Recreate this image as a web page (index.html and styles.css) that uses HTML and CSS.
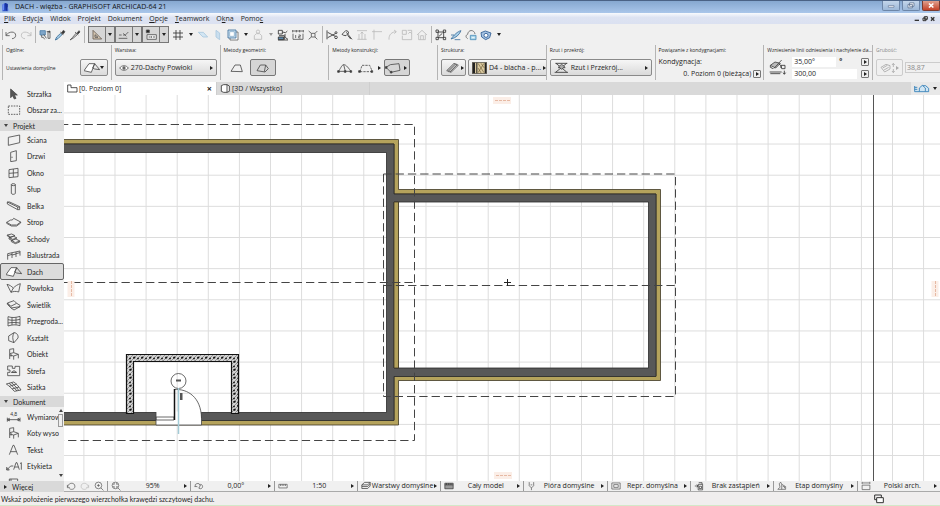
FILE: index.html
```html
<!DOCTYPE html>
<html lang="pl">
<head>
  <meta charset="UTF-8" />
  <title>DACH - więźba - GRAPHISOFT ARCHICAD-64 21</title>
  <link rel="stylesheet" href="styles.css">
</head>
<body>
  <header class="titlebar">
    <svg class="app-icon" viewBox="0 0 30 30"><path d="M4 8l8-5 8 3v22H4z" fill="#2c50c8"/><path d="M12 3l8 3v22l-6-4z" fill="#16309a"/><path d="M20 14l6 14h-6z" fill="#7fa2f0"/><path d="M4 8l5-3v18l-5 5z" fill="#6d8ff0"/></svg>
    <h1>DACH - więźba - GRAPHISOFT ARCHICAD-64 21</h1>
    <div class="window-buttons">
      <button aria-label="Minimalizuj"><svg viewBox="0 0 51 27"><path d="M17 14h18v5H17z" fill="#fff" stroke="#5b6f8e" stroke-width="2"/></svg></button>
      <button aria-label="Przywróć"><svg viewBox="0 0 51 27"><path d="M21 5h14v11H21zM16 10h14v11H16z" fill="#fff" stroke="#5b6f8e" stroke-width="2.5"/></svg></button>
      <button class="close" aria-label="Zamknij"><svg viewBox="0 0 51 27"><path d="M19 7l14 13M33 7L19 20" stroke="#fff" stroke-width="5"/></svg></button>
    </div>
  </header>

  <nav class="menubar">
    <button><u>P</u>lik</button>
    <button>Edyc<u>j</u>a</button>
    <button>Widok</button>
    <button>Projekt</button>
    <button>Dokument</button>
    <button><u>O</u>pcje</button>
    <button><u>T</u>eamwork</button>
    <button>O<u>k</u>na</button>
    <button>Pomo<u>c</u></button>
    <svg class="doc-buttons" viewBox="0 0 66 24"><path d="M2 16h13" stroke="#333" stroke-width="4"/><path d="M31 5h9v8h-9zM27 9h9v8h-9z" fill="#eee" stroke="#333" stroke-width="3"/><path d="M51 7l10 10M61 7L51 17" stroke="#333" stroke-width="4"/></svg>
  </nav>

  <div class="toolbar">
    <span class="grip"></span>
    <button aria-label="Cofnij"><svg class="icon" viewBox="0 0 36 36"><path d="M3 9v11h11M3 19C12 6 32 6 32 19c0 7-6 10-11 10"/></svg></button>
    <button aria-label="Ponów"><svg class="icon off" viewBox="0 0 36 36"><path d="M33 9v11H22M33 19C24 6 4 6 4 19c0 7 6 10 11 10"/></svg></button>
    <span class="divider"></span>
    <button aria-label="Znajdź"><svg class="icon" viewBox="0 0 36 36"><path d="M3 5h16v13H3z" fill="#7fa6c9" stroke="#4f7fa8"/><path d="M8 18v7h5l4 6M14 16l8 12M27 6v22M23 8h10v20h-6"/><circle cx="31" cy="8" r="2" fill="#333"/></svg></button>
    <button aria-label="Pobierz parametry"><svg class="icon" viewBox="0 0 36 36"><path d="M4 33l4-9L20 13l4 4-12 12z" fill="#a9cfe8" stroke="#3b6c96"/><path d="M19 9l9 8M22 12l6-8 5 4-6 8z" fill="#333"/></svg></button>
    <button aria-label="Przekaż parametry"><svg class="icon" viewBox="0 0 36 36"><path d="M3 33l7-7 11-13 4 4-13 11z" fill="#ddd" stroke="#555"/><path d="M18 9l10 9M24 12l6-7 3 4-6 6z" fill="#333"/></svg></button>
    <span class="divider"></span>
    <div class="toggles">
      <button class="on" aria-label="Linie prowadzące"><svg class="icon" viewBox="0 0 36 36"><path d="M6 4v26h26z" fill="#d8c9b4" stroke="#655b52"/><path d="M12 17v8h9z"/></svg></button>
      <button class="on drop" aria-label="Opcje linii"><i class="caret"></i></button>
      <button class="on" aria-label="Punkty przyciągania"><svg class="icon" viewBox="0 0 36 36"><path d="M2 28h26M3 18h8M15 18h6M22 18l9-9M16 13l9 9" stroke="#555"/></svg></button>
      <button class="on drop" aria-label="Opcje przyciągania"><i class="caret"></i></button>
      <button class="on" aria-label="Tabela pomiarów"><svg class="icon" viewBox="0 0 36 36"><path d="M4 3h9v8H4z" fill="#222"/><path d="M6 17h28v14H6zM11 24h5M19 21v6M24 24h6" fill="#eee"/></svg></button>
      <button class="on drop" aria-label="Opcje tabeli"><i class="caret"></i></button>
    </div>
    <button aria-label="Siatka"><svg class="icon dark" viewBox="0 0 36 36"><path d="M12 3v30M24 3v30M3 12h30M3 24h30"/></svg></button>
    <button class="drop" aria-label="Opcje siatki"><i class="caret"></i></button>
    <button aria-label="Płaszczyzna edycji"><svg class="icon" viewBox="0 0 36 36"><path d="M4 10h15l13 14H18z" fill="#d3e6f3" stroke="#a9c8df"/></svg></button>
    <button aria-label="Płaszczyzna pionowa"><svg class="icon" viewBox="0 0 36 36"><path d="M12 4l11 8v20l-11-8z" fill="#c9deee" stroke="#a9c8df"/></svg></button>
    <button aria-label="Rzut odniesienia"><svg class="icon" viewBox="0 0 36 36"><path d="M9 9h24v24H9z" fill="#fff" stroke="#666"/><path d="M3 3h24v24H3z" fill="#cfe3f2" stroke="#3d6f9c"/><path d="M8 8h14v14H8z" fill="#fff" stroke="#8cb0cc"/></svg></button>
    <button class="drop" aria-label="Opcje odniesienia"><i class="caret"></i></button>
    <button aria-label="Zawieś grupy"><svg class="icon off" viewBox="0 0 36 36"><circle cx="18" cy="8" r="5"/><path d="M7 31V20l6-6h10l6 6v11z"/></svg></button>
    <button class="drop" aria-label="Opcje grup"><i class="caret pale"></i></button>
    <button aria-label="Zamknij grupę"><svg class="icon dark" viewBox="0 0 36 36"><path d="M4 4h12v11H4zM16 9l10 2 5-5M6 20h16v12M24 15v10l9 6"/><path d="M4 24h16v8H4z" fill="#5d89ad"/><path d="M3 33h30"/></svg></button>
    <button aria-label="Wymiary"><svg class="icon" viewBox="0 0 36 36"><path d="M2 6h32M2 3v7M13 3v7M23 3v7M34 3v7M3 14v17h30V14M11 18v9M20 18h5v4h-5v5h6"/></svg></button>
    <button aria-label="Przecięcie"><svg class="icon" viewBox="0 0 36 36"><path d="M13 13h11v11H13zM5 6l8 7M31 6l-7 7M5 31l8-7M31 31l-7-7"/></svg></button>
    <span class="divider"></span>
    <button aria-label="Rozetnij"><svg class="icon dark" viewBox="0 0 36 36"><path d="M3 4v27M5 10l23 12M5 26l23-12"/><circle cx="30" cy="25" r="4"/><circle cx="30" cy="11" r="3"/></svg></button>
    <button aria-label="Dopasuj"><svg class="icon dark" viewBox="0 0 36 36"><path d="M3 16L14 5l6 1 3 6-8 8-7-1zM16 10l17 21M20 19l9 11"/></svg></button>
    <button aria-label="Wyrównaj"><svg class="icon off" viewBox="0 0 36 36"><path d="M3 5h30M9 31V15M18 31V9M27 31V15M4 31h28M14 14l4-5 4 5"/></svg></button>
    <button aria-label="Narożnik"><svg class="icon off" viewBox="0 0 36 36"><path d="M9 32V8h24M3 8h6V2"/></svg></button>
    <button aria-label="Zaokrąglij"><svg class="icon off" viewBox="0 0 36 36"><path d="M9 32C8 16 18 9 30 8M24 3l7 5-6 6"/></svg></button>
    <button aria-label="Zmień wymiary"><svg class="icon off" viewBox="0 0 36 36"><path d="M4 4h12v12H4zM20 4h12v28H4V20M22 14l5-5 5 5"/></svg></button>
    <button aria-label="Dom"><svg class="icon off" viewBox="0 0 36 36"><path d="M3 18L18 4l15 14M8 16v16h20V16M14 32V20h8v12"/></svg></button>
    <span class="divider"></span>
    <button aria-label="Zaznacz"><svg class="icon dark" viewBox="0 0 36 36"><path d="M9 9h17v17H9zM3 3h7v7H3zM25 3h7v7h-7zM3 25h7v7H3zM25 25h7v7h-7zM12 22l10-9"/></svg></button>
    <button aria-label="Ołówek"><svg class="icon" viewBox="0 0 36 36"><path d="M3 30c9-12 20-23 30-25-5 12-14 21-30 25z" fill="#a9cfe8" stroke="#3d6f9c"/><path d="M3 18l10 0M14 32h17" stroke="#3d6f9c"/></svg></button>
    <button aria-label="Chmura"><svg class="icon" viewBox="0 0 36 36"><path d="M8 29c-7-4-6-11 0-13C9 2 27 0 30 15" stroke="#666"/><path d="M16 19h17v13H16z" fill="#a9d4e8" stroke="#4b8db8"/><path d="M20 26h9" stroke="#fff"/></svg></button>
    <button aria-label="Publikuj"><svg class="icon" viewBox="0 0 36 36"><path d="M3 11l13-5 17 6-4 14-12 6L5 24z" fill="#a5c2e2" stroke="#2d5a91"/><circle cx="18" cy="19" r="6" fill="#fff" stroke="#2d5a91"/></svg></button>
    <button class="drop" aria-label="Więcej"><i class="caret"></i></button>
  </div>

  <div class="infobox">
    <section>
      <h2>Ogólne:</h2>
      <div class="fields">
        <span class="small">Ustawienia domyślne</span>
        <button class="field default-tool" aria-label="Dach"><svg class="tool-icon" viewBox="0 0 48 36"><use href="#roof"/></svg><i class="caret"></i></button>
      </div>
    </section>
    <section>
      <h2>Warstwa:</h2>
      <div class="fields">
        <button class="field wide"><svg class="eye" viewBox="0 0 30 24"><path d="M2 12C8 3 22 3 28 12 22 21 8 21 2 12z" fill="#fff" stroke="#555" stroke-width="2.5"/><circle cx="15" cy="12" r="5" fill="#666"/></svg><span>270-Dachy Powłoki</span><i class="arrow"></i></button>
      </div>
    </section>
    <section>
      <h2>Metody geometrii:</h2>
      <div class="fields methods">
        <button aria-label="Jedna połać"><svg class="tool-icon" viewBox="0 0 48 36"><path d="M6 28l12-19h16l6 20z"/></svg></button>
        <button class="on" aria-label="Wiele połaci"><svg class="tool-icon" viewBox="0 0 48 36"><path d="M6 26L16 9h16l8 11-10 10zM32 9L28 29M16 9"/></svg></button>
      </div>
    </section>
    <section>
      <h2>Metody konstrukcji:</h2>
      <div class="fields methods three">
        <button aria-label="Metoda 1"><svg class="tool-icon" viewBox="0 0 48 36"><path d="M4 28C10 22 14 8 20 8s10 4 22 20z M20 8l5 20"/><path d="M2 26h5v5H2zM22 26h5v5h-5zM39 26h5v5h-5z" fill="#333"/></svg></button>
        <button aria-label="Metoda 2"><svg class="tool-icon" viewBox="0 0 48 36"><path d="M6 29l6-19h23l7 16M6 29h34" stroke-dasharray="7 3"/><path d="M2 26h5v5H2zM39 26h5v5h-5z" fill="#333"/></svg><i class="arrow"></i></button>
        <button class="on" aria-label="Metoda 3"><svg class="tool-icon" viewBox="0 0 48 36"><path d="M3 16L16 8l26-3 3 20-27 6z"/><path d="M1 14h5v5H1zM16 28h5v5h-5z" fill="#333"/></svg><i class="arrow"></i></button>
      </div>
    </section>
    <section>
      <h2>Struktura:</h2>
      <div class="fields">
        <button class="field pattern" aria-label="Typ struktury"><svg class="tool-icon" viewBox="0 0 48 36"><path d="M5 26L27 4M11 29L34 6M18 31L40 10M5 26l13 5M27 4l13 6M8 27L30 5M15 30L37 8" stroke="#555"/></svg><i class="arrow"></i></button>
        <button class="field wide"><svg class="swatch" viewBox="0 0 45 36"><path d="M1 1h43v34H1z" fill="#d9c9a0" stroke="#222" stroke-width="2"/><path d="M2 2h7v32H2zM13 2h3v32h-3zM38 2h5v32h-5z" fill="#222"/><path d="M18 4l18 28M18 18l10 16M27 4l10 14M36 4L18 32" stroke="#6f5d38" stroke-width="2"/></svg><span>D4 - blacha - p...</span><i class="arrow"></i></button>
      </div>
    </section>
    <section>
      <h2>Rzut i przekrój:</h2>
      <div class="fields">
        <button class="field wide"><svg class="swatch" viewBox="0 0 45 36"><path d="M4 4h36M6 4l32 26M38 4L6 30M2 31h40M12 17h22" stroke="#333" stroke-width="2.5" fill="none"/><path d="M14 14l9-7 9 7-9 8z" fill="#aaa" stroke="#333" stroke-width="2"/></svg><span>Rzut i Przekrój...</span><i class="arrow"></i></button>
      </div>
    </section>
    <section>
      <h2>Powiązanie z kondygnacjami:</h2>
      <div class="story">
        <span>Kondygnacja:</span>
        <span class="story-value">0. Poziom 0 (bieżąca) <button class="mini" aria-label="Wybierz kondygnację"><i class="arrow"></i></button></span>
      </div>
    </section>
    <section>
      <h2>Wzniesienie linii odniesienia i nachylenie da...</h2>
      <div class="slope">
        <svg class="slope-icon" viewBox="0 0 54 54"><path d="M4 22l14-10 16 4-14 14zM4 22v6l8 4M14 32l24-26" stroke="#444" stroke-width="2.5" fill="#bbb"/><path d="M36 30a10 10 0 0 0-6-12M36 22h12v10H38zM46 38v10m-4-4l4 5 4-5M2 42h36M4 47h30" stroke="#333" stroke-width="2.5" fill="none"/></svg>
        <div class="slope-fields">
          <div><input class="angle" aria-label="Nachylenie" value="35,00°"><b>°</b><button class="mini" aria-label="Metoda nachylenia"><i class="arrow"></i></button></div>
          <div><input aria-label="Wzniesienie" value="300,00"><button class="mini" aria-label="Metoda wzniesienia"><i class="arrow"></i></button></div>
        </div>
      </div>
    </section>
    <section class="disabled">
      <h2>Grubość:</h2>
      <div class="fields">
        <button class="field thickness" disabled aria-label="Grubość"><svg class="tool-icon" viewBox="0 0 48 36"><path d="M3 16l15-9 12 4v10l-16 9zM8 18l14-8M12 24l14-8M40 5v10m-4-6l4-5 4 5M40 31V21m-4 6l4 5 4-5"/></svg><i class="arrow pale"></i></button>
        <input aria-label="Grubość połaci" value="38,87" disabled>
      </div>
    </section>
  </div>

  <div class="workspace">
    <aside class="toolbox">
      <div class="tool-group select-group">
        <button class="tool"><svg class="tool-icon" viewBox="0 0 48 36"><path d="M14 3v26l6-6 5 10 5-2-5-10h9z" fill="#555"/></svg>Strzałka</button>
        <button class="tool"><svg class="tool-icon" viewBox="0 0 48 36"><path d="M7 6h34v25H7z" stroke-dasharray="5 3"/></svg>Obszar za...</button>
      </div>
      <button class="group-head"><i class="down"></i>Projekt</button>
      <div class="tool-group project-group">
        <button class="tool"><svg class="tool-icon" viewBox="0 0 48 36"><path d="M7 10l34-7v23L7 34z"/></svg>Ściana</button>
        <button class="tool"><svg class="tool-icon" viewBox="0 0 48 36"><path d="M14 7l17-5v30l-17 3zM18 20v4"/></svg>Drzwi</button>
        <button class="tool"><svg class="tool-icon" viewBox="0 0 48 36"><path d="M9 8l27-4v25L9 32zM22 6v24M9 19l27-2"/></svg>Okno</button>
        <button class="tool"><svg class="tool-icon" viewBox="0 0 48 36"><ellipse cx="22" cy="5" rx="6" ry="3"/><path d="M16 5v26c0 4 12 4 12 0V5"/></svg>Słup</button>
        <button class="tool"><svg class="tool-icon" viewBox="0 0 48 36"><path d="M4 6h7l30 14v9h-6L4 12zM35 29v-8L4 6M35 21h6"/></svg>Belka</button>
        <button class="tool"><svg class="tool-icon" viewBox="0 0 48 36"><path d="M2 19l12-7h5l4-5 21 11-12 9H16zM2 19v3l14 8h16l12-9v-3"/></svg>Strop</button>
        <button class="tool"><svg class="tool-icon" viewBox="0 0 48 36"><path d="M4 6l13-3 10 5-13 4zM9 14l14-4 10 5-13 4zM16 22l14-4 11 6-13 5zM4 6v3l12 6M9 14v4l13 6M16 22v4l12 6 13-5v-4"/></svg>Schody</button>
        <button class="tool"><svg class="tool-icon" viewBox="0 0 48 36"><path d="M5 14l37-8M5 14v18M18 11v16M30 9v15M42 6v14M5 20l13-4M18 18l12-3M30 14l12-3"/></svg>Balustrada</button>
        <button class="tool selected"><svg class="tool-icon" viewBox="0 0 48 36"><g id="roof"><path d="M0 26L15 5h17L22 31z" fill="#fff"/><path d="M32 5l15 18-15-2-6-3z"/></g></svg>Dach</button>
        <button class="tool"><svg class="tool-icon" viewBox="0 0 48 36"><path d="M3 7c9 2 13 6 19 11C28 12 34 8 43 5l-5 25c-8-3-16-2-23 1zM22 18l-7 13"/></svg>Powłoka</button>
        <button class="tool"><svg class="tool-icon" viewBox="0 0 48 36"><path d="M4 12l20-7 8 8-18 9zM14 22l-10-10v4l11 11 27-4M32 13l10 6v4L24 33l-9-6"/></svg>Świetlik</button>
        <button class="tool"><svg class="tool-icon" viewBox="0 0 48 36"><path d="M6 5c12 4 24 3 36-1v28c-12-4-24-3-36 1zM18 7v23M30 7v22M6 14c12 3 24 2 36-1M6 24c12-2 24-2 36 0"/></svg>Przegroda...</button>
        <button class="tool"><svg class="tool-icon" viewBox="0 0 48 36"><path d="M24 2c8 0 14 8 12 16L24 32 8 26V12zM24 2c-5 8-5 20 0 30"/></svg>Kształt</button>
        <button class="tool"><svg class="tool-icon" viewBox="0 0 48 36"><g id="chair"><path d="M11 4l12-2v12l-12 3zM11 17v16M11 21l12 3 14-5-14-5M23 24v11M37 19v12M15 18v8"/></g></svg>Obiekt</button>
        <button class="tool"><svg class="tool-icon" viewBox="0 0 48 36"><path d="M5 3h14v7h8V4h14v28H5V22h7v-7H5zM18 22c2-6 10-6 12 0zM15 22h18"/></svg>Strefa</button>
        <button class="tool"><svg class="tool-icon" viewBox="0 0 48 36"><path d="M1 9l22-6c7 4 16 14 22 24l-20 4C17 22 9 14 1 9zM9 7c8 5 16 14 24 23M16 5c7 5 15 13 22 23M10 16l22-7M18 24l21-6"/></svg>Siatka</button>
      </div>
      <button class="group-head"><i class="down"></i>Dokument</button>
      <div class="tool-group document-group">
        <button class="tool"><svg class="tool-icon" viewBox="0 0 48 36"><path d="M4 20v12M42 20v12M4 26h38M4 26l6-4v8zM42 26l-6-4v8z"/><text x="13" y="16">4,8</text></svg>Wymiarow</button>
        <button class="tool"><svg class="tool-icon" viewBox="0 0 48 36"><use href="#chair"/></svg>Koty wyso</button>
        <button class="tool"><svg class="tool-icon" viewBox="0 0 48 36"><path d="M10 32L21 4h3l11 28M14 23h17"/></svg>Tekst</button>
        <button class="tool"><svg class="tool-icon" viewBox="0 0 48 36"><path d="M2 30l12-12h8M2 22v8h8zM23 29l7-21h3l7 21M26 21h11M42 11l4-3v21"/></svg>Etykieta</button>
        <button class="tool" aria-label="Wypełnienie"><svg class="tool-icon" viewBox="0 0 48 36"><path d="M10 6h25v28H10zM15 6v28M10 14h25"/></svg></button>
        <div class="scroll"><i class="up"></i><span class="thumb"></span><i class="down"></i></div>
      </div>
      <button class="group-head more"><i class="arrow"></i>Więcej</button>
    </aside>

    <main class="view">
      <div class="tabs">
        <button class="tab active"><svg class="tab-icon" viewBox="0 0 33 27"><path d="M2 24V3h10v8h18v13z"/></svg>[0. Poziom 0]<span class="tab-close">×</span></button>
        <button class="tab"><svg class="tab-icon" viewBox="0 0 33 27"><path d="M4 5l7-3h10v23H11l-7-3zM21 2l7 4v16l-7 3"/></svg>[3D / Wszystko]</button>
        <button class="view-menu" aria-label="Widoki"><svg viewBox="0 0 48 27"><path d="M2 6v17h14M2 10h8M2 16h8M16 23V12l9-8 9 8v11zM34 23h10V13l-9-8h-9" fill="#cfe6f5" stroke="#2b7ab5" stroke-width="2.5"/></svg><i class="caret"></i></button>
      </div>
      <svg class="plan">
        <defs>
          <pattern id="grid" x="83.4" y="112.4" width="31.1" height="31.15" patternUnits="userSpaceOnUse">
            <path d="M0 .5h31.1M.5 0v31.15" stroke="#dcdcdc" fill="none"/>
          </pattern>
          <pattern id="hatch" width="8" height="8" patternUnits="userSpaceOnUse">
            <rect width="8" height="8" fill="#d2d2d2"/>
            <path d="M-1 5l6-6M0 8l8-8M3 9l6-6" stroke="#777" stroke-width=".7"/>
            <path d="M1 1.500l2-1 1 1.500-2 1zM5 5l2-.5.5 1.500-2 1zM1 6l1.500-.5.5 1.500-1.500.5zM5.500 1.500h1.500v1.500h-1.500z" fill="#111"/>
          </pattern>
        </defs>
        <g transform="translate(-64 -95)">
          <rect class="paper" x="64" y="95" width="100%" height="100%" fill="url(#grid)"/>
          <path class="sheet-edge" d="M873.5 95v2000"/>

          <!-- walls: insulation first, then the core -->
          <path class="insulation" d="M60 139.5H398.5V189.5H660.5V380.5H398.5V425H60V420H394V376H656V194H394V144H60z"/>
          <path class="insulation" d="M394 202h4.5v166h-4.5z"/>
          <path class="core" d="M60 144H394V194H656V376.500H394V420.500H60V412.500H386.500V152.500H60zM394 202V368H648.500V202z" fill-rule="evenodd"/>
          <path class="insulation" d="M394 202h4.500v166h-4.500z"/>

          <!-- vestibule and door -->
          <path class="hatched" d="M126.500 413.500V354.500H238.500V413.500H231.500V361.500H133.500V413.500z"/>
          <path fill="#fff" d="M156 411.500h45.500V425H156z"/>
          <path class="thin" d="M156 417h18v3h-18zM156 412v13h45.500v-13"/>
          <path class="thin" d="M174 389.500c14-1 27 8 27.500 28.500"/>
          <path class="leaf" d="M174.500 389v31"/>
          <circle class="thin" cx="178.500" cy="381" r="7.500"/>
          <path d="M176 379.500h5v2h-5zM180 393h2.500v7H180z" fill="#555"/>
          <path d="M178.500 388v46" stroke="#a3cbd6" stroke-width="1.500"/>

          <!-- roof outlines -->
          <path class="roof-line" d="M60 124.500H414.500V440.500H60M60 282.500H414.500"/>
          <path class="roof-line" d="M383.500 174V396.500H675.500V174zM383.500 285.500H675.500"/>
          <path class="cross" d="M504 282.500h7M507.500 279v7"/>

          <path class="marker" d="M493 100.500h18M494 475.500h18M71 281v16M935 281v16"/>
          <path class="marker-dash" d="M495 100.500h16M496 475.500h16M71.500 281v16M935.500 281v16"/>
        </g>
      </svg>

      <div class="quickbar">
        <div class="nav-buttons">
          <button aria-label="Poprzedni widok"><svg class="icon" viewBox="0 0 36 36"><path d="M5 14v10h9M6 22C8 4 32 4 32 19c0 13-16 13-20 8"/></svg></button>
          <button aria-label="Następny widok"><svg class="icon off" viewBox="0 0 36 36"><path d="M31 14v10h-9M30 22C28 4 4 4 4 19c0 13 16 13 20 8"/></svg></button>
          <button aria-label="Powiększ"><svg class="icon" viewBox="0 0 36 36"><circle cx="16" cy="16" r="12"/><path d="M25 25l9 9M11 16h10M16 11v10"/></svg></button>
        </div>
        <button class="option"><svg class="icon" viewBox="0 0 36 36"><circle cx="16" cy="16" r="12"/><path d="M25 25l9 9M10 14v-4h4M18 10h4v4M22 18v4h-4M14 22h-4v-4"/></svg><span>95%</span><i class="arrow"></i></button>
        <button class="option"><svg class="icon" viewBox="0 0 36 36"><path d="M4 20a9 9 0 0 1 18-4M2 20h10M16 24a8 8 0 1 0 8-12l-6 14"/></svg><span>0,00°</span><i class="arrow"></i></button>
        <button class="option"><svg class="icon" viewBox="0 0 36 36"><path d="M3 12h30v13H3zM9 12v6M15 12v6M21 12v6M27 12v6"/></svg><span>1:50</span><i class="arrow"></i></button>
        <button class="option"><svg class="icon dark" viewBox="0 0 36 36"><path d="M3 14L13 5h20L24 14zM3 14v6h21l9-9V5M3 20v7h21l9-9v-7"/></svg><span>Warstwy domyślne</span><i class="arrow"></i></button>
        <button class="option"><svg class="icon dark" viewBox="0 0 36 36"><path d="M3 8h30v20H3z" fill="#999"/><path d="M3 14h30M9 8v6M17 8v6M25 8v6" /></svg><span>Cały model</span><i class="arrow"></i></button>
        <button class="option"><svg class="icon" viewBox="0 0 36 36"><path d="M8 4v13l8 8 8-8V4M16 25v8M13 14h6"/></svg><span>Pióra domyślne</span><i class="arrow"></i></button>
        <button class="option"><svg class="icon" viewBox="0 0 36 36"><path d="M3 7h30v22H3zM10 13h16v10H10z"/></svg><span>Repr. domyślna</span><i class="arrow"></i></button>
        <button class="option"><svg class="icon dark" viewBox="0 0 36 36"><path d="M15 12h16v20H15zM3 18h12M10 13l5 5-5 5M17 6h12v6M19 19h8v8h-8z"/></svg><span>Brak zastąpień</span><i class="arrow"></i></button>
        <button class="option"><svg class="icon" viewBox="0 0 36 36"><path d="M3 30h28V20L17 12v18M17 12l-4-8-5 6 3 12M3 30l8-8M21 20h6v6"/></svg><span>Etap domyślny</span><i class="arrow"></i></button>
        <button class="option"><svg class="icon" viewBox="0 0 36 36"><path d="M4 15h28v16H4zM4 3v8M32 3v8M4 7h28"/></svg><span>Polski arch.</span><i class="arrow"></i></button>
      </div>
    </main>
  </div>

  <footer class="statusbar">
    <span>Wskaż położenie pierwszego wierzchołka krawędzi szczytowej dachu.</span>
    <svg viewBox="0 0 30 30"><path d="M2 3h20v14H2z" fill="#f3f1f1" stroke="#333" stroke-width="3"/><path d="M8 11h20v15H8z" fill="#fff" stroke="#333" stroke-width="3"/></svg>
  </footer>
</body>
</html>
```

FILE: styles.css
```css
:root {
  --panel: #f0f0f0;
  --head: #d9d9d9;
  --line: #b4b4b4;
  --text: #1e1e1e;
}

* {
  box-sizing: border-box;
}

body {
  margin: 0;
  height: 100vh;
  display: flex;
  flex-direction: column;
  overflow: hidden;
  font: 7px/10px "Open Sans", "Noto Sans", sans-serif;
  color: var(--text);
  background: var(--panel);
}

h1,
h2 {
  margin: 0;
  font-size: inherit;
  font-weight: normal;
}

button,
input {
  font: inherit;
  color: inherit;
  padding: 0;
  margin: 0;
  border: none;
  background: none;
  white-space: nowrap;
}

svg {
  display: block;
  flex: none;
}

/* title bar */
.titlebar {
  display: flex;
  align-items: center;
  height: 13px;
  flex: none;
  padding-left: 1px;
  border-top: 1px solid #4a6285;
  background: linear-gradient(#86a8d0, #a9c6ea);
  color: #111;
}

.app-icon {
  width: 10px;
  height: 10px;
  margin-right: 4px;
}

.window-buttons {
  display: flex;
  gap: 2px;
  margin-left: auto;
  align-self: flex-start;
}

.window-buttons button {
  width: 18px;
  height: 10px;
  border: 1px solid #6d86a8;
  border-top: none;
  border-radius: 0 0 2px 2px;
  background: linear-gradient(#c3d5ea, #9db8d8);
}

.window-buttons svg {
  width: 16px;
  height: 9px;
}

.window-buttons .close {
  border-color: #7a3b30;
  background: linear-gradient(#e0a08e, #c5432a);
}

/* menu */
.menubar {
  display: flex;
  align-items: center;
  gap: 7px;
  height: 11px;
  flex: none;
  padding: 1px 4px 0;
  background: linear-gradient(#f8fafd, #dde3f2 40%, #dbe1f1);
}

.doc-buttons {
  width: 22px;
  height: 8px;
  margin-left: auto;
}

/* main toolbar */
.toolbar {
  display: flex;
  align-items: center;
  gap: 3px;
  height: 21px;
  flex: none;
  padding-left: 2px;
}

.icon {
  width: 12px;
  height: 12px;
  fill: none;
  stroke: #555;
  stroke-width: 2.5;
}

.icon.dark {
  stroke: #333;
}

.icon.off {
  stroke: #bbb;
}

.grip {
  width: 1px;
  height: 11px;
  margin-right: -1px;
  background: var(--line);
}

.divider {
  width: 1px;
  height: 17px;
  background: var(--line);
}

.toolbar .drop {
  width: 7px;
}

.toggles {
  display: flex;
}

.toggles .on {
  display: flex;
  align-items: center;
  justify-content: center;
  width: 18px;
  height: 17px;
  border: 1px solid #777;
  background: #d6d6d6;
}

.toggles .on.drop {
  width: 9px;
  border-left: none;
}

.caret,
.arrow,
.down,
.up {
  display: block;
  flex: none;
  width: 0;
  height: 0;
  margin: 0 auto;
  border: 2px solid transparent;
}

.caret {
  border-width: 3px 2px 0;
  border-top-color: #222;
}

.down {
  border-width: 3px 2px 0;
  border-top-color: #444;
}

.up {
  border-width: 0 2px 3px;
  border-bottom-color: #444;
}

.arrow {
  border-width: 2px 0 2px 3px;
  border-left-color: #222;
}

.caret.pale {
  border-top-color: #999;
}

.arrow.pale {
  border-left-color: #aaa;
}

/* info box */
.infobox {
  display: grid;
  grid-template-columns: repeat(8, 8fr) 5fr;
  height: 37px;
  flex: none;
  padding: 0 0 2px 2px;
}

.infobox section {
  display: flex;
  flex-direction: column;
  min-width: 0;
  padding-left: 3px;
  border-left: 1px solid var(--line);
  overflow: hidden;
}

.infobox h2,
.small {
  font-size: 5px;
  white-space: nowrap;
}

.fields {
  display: flex;
  align-items: center;
  gap: 2px;
  flex: 1;
  padding-right: 3px;
}

.small {
  flex: 1;
}

.field {
  display: flex;
  align-items: center;
  height: 17px;
  padding: 0 3px;
  border: 1px solid #8a8a8a;
  border-radius: 2px;
  background: linear-gradient(#f6f6f6, #dadada);
}

.field.wide {
  flex: 1;
  gap: 2px;
}

.field .arrow {
  margin-right: 0;
}

.default-tool,
.thickness {
  width: 28px;
}

.pattern {
  width: 25px;
}

.eye {
  width: 10px;
  height: 8px;
}

.swatch {
  width: 15px;
  height: 12px;
}

.tool-icon {
  width: 16px;
  height: 12px;
  fill: none;
  stroke: #4a4a4a;
  stroke-width: 2.5;
}

.tool-icon text {
  font-size: 15px;
  fill: #333;
  stroke: none;
}

.fields.methods {
  gap: 0;
}

.methods button {
  display: flex;
  align-items: center;
  justify-content: center;
  width: 26px;
  height: 17px;
}

.methods .on {
  border: 1px solid #777;
  border-radius: 2px;
  background: #d6d6d6;
}

.story {
  display: flex;
  flex-direction: column;
  gap: 2px;
  padding-top: 2px;
}

.story-value {
  display: flex;
  align-items: center;
  justify-content: flex-end;
  gap: 2px;
  padding-right: 2px;
  white-space: nowrap;
}

.mini {
  display: flex;
  align-items: center;
  width: 8px;
  height: 8px;
  border: 1px solid #777;
  border-radius: 1px;
}

.slope {
  display: flex;
  gap: 5px;
  padding: 2px 3px 0 2px;
}

.slope-icon {
  width: 18px;
  height: 20px;
}

.slope-fields {
  display: flex;
  flex-direction: column;
  gap: 2px;
  flex: 1;
}

.slope-fields div {
  display: flex;
  align-items: center;
  gap: 3px;
}

.slope-fields input {
  width: 65px;
  height: 10px;
  padding-left: 2px;
  background: #fff;
}

.slope-fields .angle {
  width: 44px;
}

.slope-fields .mini {
  margin-left: auto;
}

.disabled input {
  width: 40px;
  height: 11px;
  padding-left: 1px;
  border: 1px solid #ccc;
}

.disabled {
  color: #888;
}

.disabled .tool-icon {
  stroke: #aaa;
}

.disabled .field {
  border-color: #ccc;
  background: none;
}

/* toolbox */
.workspace {
  display: flex;
  flex: 1;
  min-height: 0;
}

.toolbox {
  display: flex;
  flex-direction: column;
  width: 64px;
  flex: none;
  font-family: Lato, "Open Sans", sans-serif;
}

.select-group {
  padding: 3px 0 2px;
}

.project-group {
  padding-bottom: 1px;
}

.tool {
  display: flex;
  align-items: center;
  gap: 5px;
  width: 100%;
  height: 17px;
  padding-left: 5px;
  border: 1px solid transparent;
  overflow: hidden;
  text-align: left;
}

.tool:nth-child(even) {
  height: 16px;
}

.tool.selected {
  border-color: #666;
  border-radius: 2px;
  background: #dcdcdc;
}

.group-head {
  display: flex;
  align-items: center;
  gap: 5px;
  height: 11px;
  flex: none;
  padding-left: 4px;
  background: var(--head);
}

.group-head i {
  margin: 0;
}

.document-group {
  position: relative;
  flex: 1;
  min-height: 0;
  padding-top: 1px;
  overflow: hidden;
}

.document-group .tool {
  width: 60px;
}

.scroll {
  position: absolute;
  top: 2px;
  right: 0;
  bottom: 4px;
  width: 6px;
  display: flex;
  flex-direction: column;
}

.thumb {
  width: 5px;
  height: 13px;
  margin: 2px 0 auto;
  border: 1px solid #999;
  background: #eee;
}

/* drawing area */
.view {
  display: flex;
  flex-direction: column;
  flex: 1;
  min-width: 0;
}

.tabs {
  display: flex;
  height: 13px;
  flex: none;
  background: var(--head);
}

.tab {
  display: flex;
  align-items: center;
  gap: 1px;
  width: 153px;
  padding-left: 3px;
  border-right: 1px solid #cecece;
}

.tab.active {
  background: #fff;
}

.tab-icon {
  width: 11px;
  height: 9px;
  fill: #fff;
  stroke: #333;
  stroke-width: 2.5;
}

.tab-close {
  margin: 0 4px 0 auto;
  font-size: 9px;
  font-weight: bold;
}

.view-menu {
  display: flex;
  align-items: center;
  width: 29px;
  margin-left: auto;
  padding-left: 3px;
  background: #e8e8e8;
}

.view-menu svg {
  width: 16px;
  height: 9px;
}

.plan {
  width: 100%;
  flex: 1;
  min-height: 0;
  background: #fff;
}

.sheet-edge {
  stroke: #555;
}

.insulation {
  fill: #b5a35c;
  stroke: #3f3826;
  stroke-width: .8;
}

.core {
  fill: #585858;
  stroke: #2a2a2a;
  stroke-width: .8;
}

.hatched {
  fill: url(#hatch);
  stroke: #111;
  stroke-width: 1.2;
}

.thin {
  fill: none;
  stroke: #444;
  stroke-width: .8;
}

.leaf {
  stroke: #111;
  stroke-width: 1.5;
}

.roof-line {
  fill: none;
  stroke: #444;
  stroke-dasharray: 8.3 4;
}

.cross {
  stroke: #222;
}

.marker {
  fill: none;
  stroke: #fbeee7;
  stroke-width: 7;
}

.marker-dash {
  fill: none;
  stroke: #e6b9a4;
  stroke-dasharray: 3 1;
}

/* bottom bars */
.quickbar {
  display: flex;
  height: 11px;
  flex: none;
  border-bottom: 1px solid #aaa;
}

.nav-buttons {
  display: flex;
  align-items: center;
  gap: 4px;
  padding-left: 2px;
  width: 43px;
}

.quickbar .icon {
  width: 10px;
  height: 10px;
}

.option {
  display: flex;
  align-items: center;
  flex: 1 1 0;
  min-width: 0;
  padding: 0 3px 0 3px;
  border-left: 1px solid #999;
}

.option span {
  flex: 1;
  text-align: center;
}

.statusbar {
  display: flex;
  align-items: center;
  justify-content: space-between;
  height: 14px;
  flex: none;
  padding: 0 56px 0 1px;
  border-bottom: 1px solid #d3e8c8;
  background: #f0eeee;
  font-family: Lato, "Open Sans", sans-serif;
}

.statusbar svg {
  width: 10px;
  height: 10px;
}
```
